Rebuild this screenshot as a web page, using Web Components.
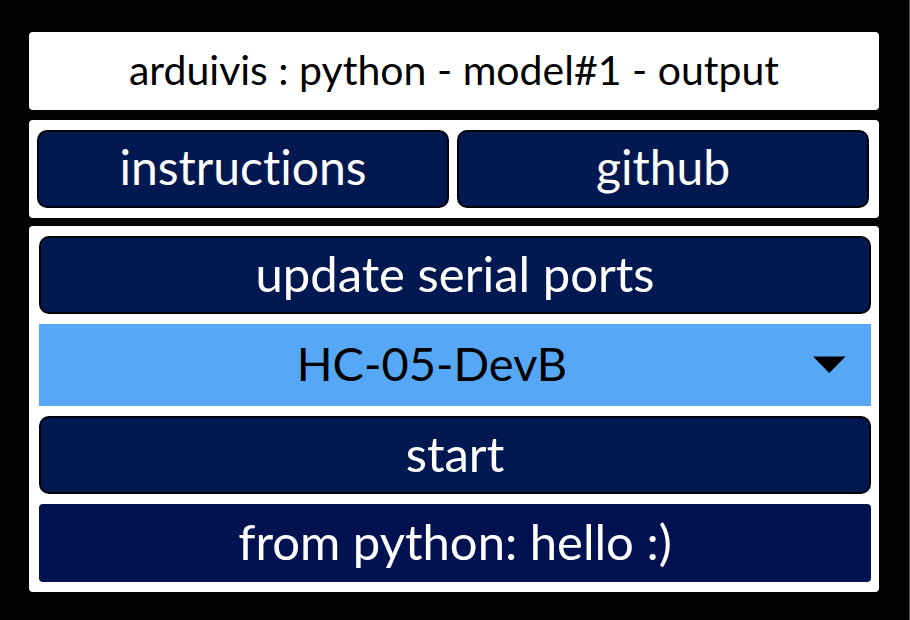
<!DOCTYPE html>
<html lang="en">
<head>
<meta charset="utf-8">
<title>arduivis</title>
<style>
  html { background: #020202; }
  body { margin: 0; font-family: Lato, "Open Sans", sans-serif; font-variant-ligatures: none; }
</style>
</head>
<body>
<av-window>
  <av-panel><av-title>arduivis : python - model#1 - output</av-title></av-panel>
  <av-panel class="links">
    <av-button size="small">instructions</av-button>
    <av-button size="small">github</av-button>
  </av-panel>
  <av-panel class="controls">
    <av-button>update serial ports</av-button>
    <av-select label="serial port" value="HC-05-DevB"></av-select>
    <av-button>start</av-button>
    <av-message>from python: hello :)</av-message>
  </av-panel>
</av-window>

<script>
class AvElement extends HTMLElement {
  constructor() {
    super();
    this.attachShadow({ mode: 'open' });
  }
  connectedCallback() {
    this.shadowRoot.innerHTML = this.render();
  }
}

customElements.define('av-window', class extends AvElement {
  render() {
    return `<style>
      :host {
        display: flex; flex-direction: column; gap: 8px;
        box-sizing: border-box; min-height: 100vh;
        padding: 32px 30px 28px 29px;
        background: #020202; border-right: 1px solid #4b4b4d;
      }
      ::slotted(:first-child) { margin-bottom: 2px; }
      ::slotted(.links) { --columns: 1fr 1fr; --gap: 8px; --pad: 10px 10px 10px 8px; }
      ::slotted(.controls) { --gap: 10px; --pad: 10px 8px 10px 10px; }
    </style><slot></slot>`;
  }
});

customElements.define('av-panel', class extends AvElement {
  render() {
    return `<style>
      :host {
        display: grid; grid-template-columns: var(--columns, 1fr);
        gap: var(--gap, 0); padding: var(--pad, 0);
        background: #fff; border-radius: 4px;
      }
    </style><slot></slot>`;
  }
});

customElements.define('av-title', class extends AvElement {
  render() {
    return `<style>
      :host { display: block; }
      h1 {
        margin: 0; padding-bottom: 2px; text-align: center;
        font-size: 41px; font-weight: 400; line-height: 76px; color: #000;
      }
    </style><h1><slot></slot></h1>`;
  }
});

customElements.define('av-button', class extends AvElement {
  render() {
    return `<style>
      :host { display: block; --text: 49px; }
      :host([size="small"]) { --text: 48px; }
      button {
        display: block; box-sizing: border-box; width: 100%; margin: 0;
        padding: 0 0 4px; border: 2px solid #000007; border-radius: 10px;
        background: #021850; color: #fff; cursor: pointer;
        font-family: inherit; font-size: var(--text); line-height: 70px;
        font-variant-ligatures: none;
      }
      button:hover { background: #0a2468; }
    </style><button type="button"><slot></slot></button>`;
  }
});

customElements.define('av-select', class extends AvElement {
  render() {
    return `<style>
      :host { display: grid; align-items: center; background: #56a8f7; }
      select, svg { grid-area: 1 / 1; }
      select {
        appearance: none; box-sizing: border-box; width: 100%; height: 82px; margin: 0;
        padding: 0 46px 4px 0; border: 0; border-radius: 0;
        background: transparent; color: #000; cursor: pointer;
        font-family: inherit; font-size: 47px; text-align: center; text-align-last: center;
      }
      svg { justify-self: end; margin-right: 25px; pointer-events: none; }
    </style>
    <select aria-label="${this.getAttribute('label')}">
      <option>${this.getAttribute('value')}</option>
    </select>
    <svg width="33" height="18" viewBox="0 0 33 18" aria-hidden="true"><path d="M0 0.5H32.5L16.3 17Z" fill="#020202"/></svg>`;
  }
});

customElements.define('av-message', class extends AvElement {
  render() {
    return `<style>
      :host { display: block; }
      output {
        display: block; padding-bottom: 4px; border-radius: 4px;
        background: #021250; color: #fff; text-align: center;
        font-size: 49px; line-height: 74px;
      }
    </style><output><slot></slot></output>`;
  }
});
</script>
</body>
</html>
